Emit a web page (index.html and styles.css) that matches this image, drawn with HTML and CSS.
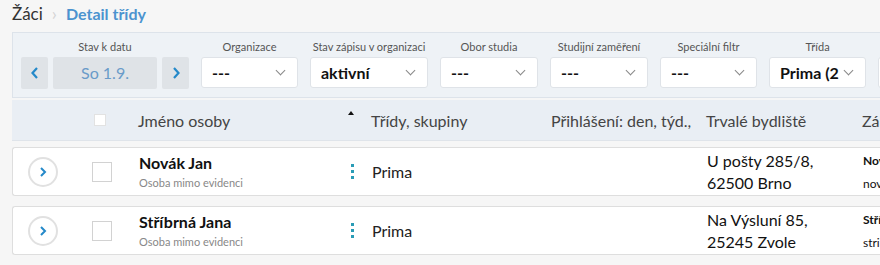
FILE: index.html
```html
<!DOCTYPE html>
<html lang="cs">
<head>
  <meta charset="UTF-8" />
  <title>Detail třídy</title>
  <link rel="stylesheet" href="styles.css">
</head>
<body>
  <div class="page">
    <!-- Drobečková navigace -->
    <div class="breadcrumb">
      <span class="crumb">Žáci</span>
      <span class="crumb-sep">›</span>
      <span class="crumb current">Detail třídy</span>
    </div>

    <!-- Filtry -->
    <div class="filters">
      <div class="filter date-filter">
        <div class="filter-label">Stav k datu</div>
        <div class="date-controls">
          <button class="nav-btn">
            <svg width="10" height="14" viewBox="0 0 10 14"><path d="M7 2 L2.5 7 L7 12" fill="none" stroke="#2489c9" stroke-width="2.2"/></svg>
          </button>
          <div class="date-box">So 1.9.</div>
          <button class="nav-btn">
            <svg width="10" height="14" viewBox="0 0 10 14"><path d="M3 2 L7.5 7 L3 12" fill="none" stroke="#2489c9" stroke-width="2.2"/></svg>
          </button>
        </div>
      </div>
      <div class="filter w97">
        <div class="filter-label">Organizace</div>
        <div class="select"><span>---</span><i class="caret"></i></div>
      </div>
      <div class="filter w118">
        <div class="filter-label">Stav zápisu v organizaci</div>
        <div class="select"><span>aktivní</span><i class="caret"></i></div>
      </div>
      <div class="filter w98">
        <div class="filter-label">Obor studia</div>
        <div class="select"><span>---</span><i class="caret"></i></div>
      </div>
      <div class="filter w98">
        <div class="filter-label">Studijní zaměření</div>
        <div class="select"><span>---</span><i class="caret"></i></div>
      </div>
      <div class="filter w97">
        <div class="filter-label">Speciální filtr</div>
        <div class="select"><span>---</span><i class="caret"></i></div>
      </div>
      <div class="filter w97">
        <div class="filter-label">Třída</div>
        <div class="select"><span class="clip">Prima (2</span><i class="caret"></i></div>
      </div>
      <div class="filter w97">
        <div class="filter-label">&nbsp;</div>
        <div class="select"><span></span></div>
      </div>
    </div>

    <!-- Hlavička tabulky -->
    <div class="table-head grid">
      <div></div>
      <div class="cell-center"><span class="check small"></span></div>
      <div class="col-name">Jméno osoby</div>
      <div class="sort"><span class="sort-arrow"></span></div>
      <div class="col-class">Třídy, skupiny</div>
      <div>Přihlášení: den, týd.,</div>
      <div>Trvalé bydliště</div>
      <div>Zákonný zástupce</div>
    </div>

    <!-- Řádky -->
    <div class="row grid">
      <div class="cell-expand">
        <span class="expand">
          <svg width="8" height="12" viewBox="0 0 8 12"><path d="M2 2 L6 6 L2 10" fill="none" stroke="#2489c9" stroke-width="2"/></svg>
        </span>
      </div>
      <div class="cell-center"><span class="check"></span></div>
      <div class="col-name">
        <div class="person">Novák Jan</div>
        <div class="note">Osoba mimo evidenci</div>
      </div>
      <div class="cell-center"><span class="kebab"><i></i><i></i><i></i></span></div>
      <div class="col-class">Prima</div>
      <div></div>
      <div class="address">U pošty 285/8,<br>62500 Brno</div>
      <div class="guardian"><b>Novák Petr</b><br>novak@example.cz</div>
    </div>

    <div class="row grid">
      <div class="cell-expand">
        <span class="expand">
          <svg width="8" height="12" viewBox="0 0 8 12"><path d="M2 2 L6 6 L2 10" fill="none" stroke="#2489c9" stroke-width="2"/></svg>
        </span>
      </div>
      <div class="cell-center"><span class="check"></span></div>
      <div class="col-name">
        <div class="person">Stříbrná Jana</div>
        <div class="note">Osoba mimo evidenci</div>
      </div>
      <div class="cell-center"><span class="kebab"><i></i><i></i><i></i></span></div>
      <div class="col-class">Prima</div>
      <div></div>
      <div class="address">Na Výsluní 85,<br>25245 Zvole</div>
      <div class="guardian"><b>Stříbrný Pavel</b><br>stribrny@example.cz</div>
    </div>
  </div>
</body>
</html>
```

FILE: styles.css
```css
/* Základ stránky */
body {
  margin: 0;
  background-color: #f6f6f6;
  font-family: "Lato", "Open Sans", sans-serif;
  color: #222;
  overflow: hidden;
}

.page {
  width: 1000px;
  padding: 4px 0 0 12px;
}

/* Drobečková navigace */
.breadcrumb {
  display: flex;
  align-items: center;
  gap: 9px;
  height: 18px;
  font-size: 17px;
}

.crumb {
  color: #333;
}

.crumb-sep {
  color: #d4d4d4;
  font-size: 18px;
}

.crumb.current {
  color: #4b93cf;
  font-weight: bold;
  font-size: 16px;
}

/* Panel s filtry */
.filters {
  display: flex;
  gap: 12px;
  margin-top: 10px;
  height: 66px;
  box-sizing: border-box;
  padding: 7px 9px 0 8px;
  background-color: #eef2f6;
  border: 1px solid #dde3ea;
  border-right: none;
}

.filter {
  display: flex;
  flex-direction: column;
  gap: 4px;
  flex-shrink: 0;
}

.filter-label {
  font-size: 11px;
  color: #555;
  text-align: center;
  white-space: nowrap;
  height: 13px;
  line-height: 13px;
}

.w97 { width: 97px; }
.w98 { width: 98px; }
.w118 { width: 118px; }

.date-controls {
  display: flex;
  gap: 5px;
}

.nav-btn {
  width: 27px;
  height: 32px;
  border: none;
  border-radius: 2px;
  background-color: #dfe3e7;
  display: flex;
  align-items: center;
  justify-content: center;
  padding: 0;
}

.date-box {
  width: 104px;
  height: 32px;
  line-height: 32px;
  border-radius: 2px;
  background-color: #dfe3e7;
  color: #6a9bc9;
  text-align: center;
  font-size: 16px;
}

.select {
  height: 31px;
  box-sizing: border-box;
  background-color: #fff;
  border: 1px solid #dfe3e8;
  border-radius: 3px;
  display: flex;
  align-items: center;
  justify-content: space-between;
  padding: 0 10px 0 10px;
  font-size: 16px;
  font-weight: bold;
  color: #111;
}

.select .clip {
  white-space: nowrap;
  overflow: hidden;
  max-width: 72px;
}

.caret {
  width: 6px;
  height: 6px;
  border-right: 1px solid #888;
  border-bottom: 1px solid #888;
  transform: rotate(45deg);
  margin-top: -4px;
  margin-right: 3px;
}

/* Mřížka tabulky */
.grid {
  display: grid;
  grid-template-columns: 68px 42px 218px 22px 189px 155px 156px 150px;
  align-items: center;
}

.col-name {
  padding-left: 16px;
}

.col-class {
  padding-left: 9px;
}

.cell-center {
  display: flex;
  justify-content: center;
  align-items: center;
}

.table-head {
  margin-top: 2px;
  height: 40px;
  background-color: #e9eef4;
  border-bottom: 1px solid #dfe4ea;
  font-size: 16px;
  color: #444;
  white-space: nowrap;
}

.check {
  width: 20px;
  height: 20px;
  box-sizing: border-box;
  border: 1px solid #d2d2d2;
  background-color: #fff;
}

.check.small {
  width: 12px;
  height: 12px;
  border-color: #e2e2e2;
  margin-left: -2px;
}

.sort {
  align-self: start;
  padding-top: 11px;
  display: flex;
  justify-content: center;
}

.sort-arrow {
  width: 0;
  height: 0;
  border-left: 3px solid transparent;
  border-right: 3px solid transparent;
  border-bottom: 4px solid #111;
}

/* Řádky */
.row {
  margin-top: 6px;
  height: 49px;
  box-sizing: border-box;
  background-color: #fff;
  border: 1px solid #dedede;
  border-right: none;
  border-radius: 3px 0 0 3px;
}

.row + .row {
  margin-top: 10px;
}

.cell-expand {
  padding-left: 15px;
  display: flex;
}

.expand {
  width: 30px;
  height: 30px;
  box-sizing: border-box;
  border: 2px solid #e1e1e1;
  border-radius: 50%;
  display: flex;
  align-items: center;
  justify-content: center;
}

.person {
  font-size: 16px;
  font-weight: bold;
  color: #111;
  line-height: 18px;
}

.note {
  font-size: 11px;
  color: #888;
  margin-top: 4px;
}

.kebab {
  display: flex;
  flex-direction: column;
  gap: 3px;
}

.kebab i {
  width: 3px;
  height: 3px;
  background-color: #2a9cb6;
}

.row .col-class {
  font-size: 16px;
}

.address {
  font-size: 16px;
  line-height: 22px;
  color: #111;
}

.guardian {
  font-size: 12px;
  line-height: 23px;
  color: #111;
  white-space: nowrap;
}
```
